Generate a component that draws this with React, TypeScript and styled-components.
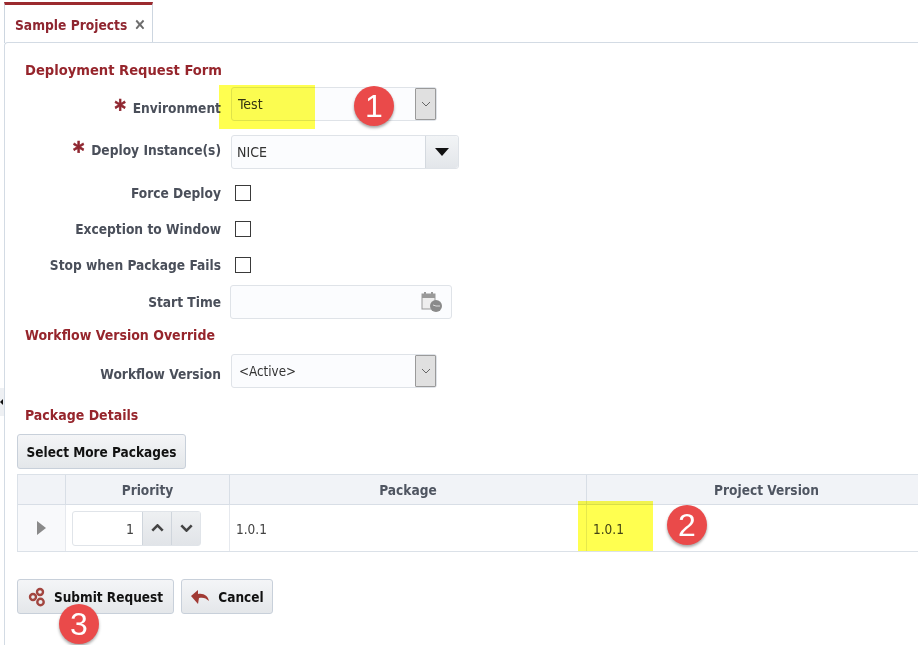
import React from "react";
import styled, { createGlobalStyle } from "styled-components";

const FONT = `"DejaVu Sans Condensed", "DejaVu Sans", sans-serif`;

const Global = createGlobalStyle`
  html, body { margin: 0; padding: 0; background: #fff; }
  body { font-family: ${FONT}; }
  #root { width: 918px; height: 645px; overflow: hidden; }
`;
const Page = styled.div`
  position: relative; width: 918px; height: 645px; overflow: hidden; background: #fff;
  display: flex; flex-direction: column;
`;
const TabBar = styled.div`
  height: 43px; box-sizing: border-box; padding: 2px 0 0 4px; display: flex; flex: none;
`;
const Tab = styled.div`
  width: 149px; height: 41px; box-sizing: border-box; border-top: 3px solid #9b2a2f;
  border-left: 1px solid #cdd6e0; border-right: 1px solid #cdd6e0; background: #fff;
  display: flex; align-items: center; padding: 2px 0 0 10px; gap: 7px;
  font: bold 13.7px ${FONT}; color: #8f2630;
`;
const Close = styled.span`color: #666; font-size: 15px; font-weight: bold; line-height: 1; -webkit-text-stroke: 0.5px #666;`;
const Panel = styled.div`
  flex: 1; margin: -1px 0 0 4px; border: 1px solid #d3dbe4; border-right: 0; border-bottom: 0;
  border-radius: 4px 0 0 0; padding: 18px 0 0 12px; box-sizing: border-box;
`;
const Heading = styled.div<{ $mb?: number }>`
  font: bold 14.6px/18px ${FONT}; color: #96252c;
  margin: 0 0 ${(p) => p.$mb ?? 0}px 8px;
`;
const SubHeading = styled(Heading)`font-size: 14px;`;
const Row = styled.div<{ $h: number; $mb?: number }>`
  display: flex; align-items: center; height: ${(p) => p.$h}px; margin-bottom: ${(p) => p.$mb ?? 0}px;
`;
const Label = styled.label<{ $nudge?: number }>`
  width: 204px; text-align: right; flex: none; margin: ${(p) => p.$nudge ?? -1}px 10px 0 0;
  font: bold 13.65px/18px ${FONT}; color: #4a4f5a;
`;
const Star = styled.span`
  color: #8f2630; font-size: 24px; font-weight: bold; line-height: 10px; margin-right: 7px; vertical-align: -4px;
  -webkit-text-stroke: 0.6px #8f2630;
`;
const Field = styled.div<{ $w: number; $h: number; $ml?: number }>`
  width: ${(p) => p.$w}px; height: ${(p) => p.$h}px; box-sizing: border-box; margin-left: ${(p) => p.$ml ?? 0}px;
  border: 1px solid #dfe3e8; border-radius: 3px; background: #fbfcfe; display: flex; align-items: center;
  font: 14px ${FONT}; color: #333;
`;
const FieldText = styled.span<{ $pad?: number; $size?: number }>`
  flex: 1; padding-left: ${(p) => p.$pad ?? 6}px; font-size: ${(p) => p.$size ?? 14}px;
`;
const Arrow = styled.div`
  width: 21px; height: 100%; box-sizing: border-box; background: #e0e0e0; border: 1px solid #9a9a9a; border-radius: 1px;
  display: flex; align-items: center; justify-content: center; flex: none;
`;
const DropButton = styled.div`
  width: 33px; height: 100%; box-sizing: border-box; border-left: 1px solid #d4d9df; background: linear-gradient(#f2f4f6, #e3e6ea);
  display: flex; align-items: center; justify-content: center; flex: none; border-radius: 0 3px 3px 0;
`;
const CalIcon = styled.svg`margin-left: auto; margin-right: 8px;`;
const Check = styled.div`
  width: 16px; height: 16px; box-sizing: border-box; border: 1px solid #3a3a3a; background: #fff; margin-left: 4px;
`;
const Btn = styled.button<{ $w: number; $mt?: number }>`
  width: ${(p) => p.$w}px; height: 35px; box-sizing: border-box; border: 1px solid #c8d0da; border-radius: 3px;
  background: linear-gradient(#f4f5f7, #e4e7ea); color: #111; padding: 0; margin-top: ${(p) => p.$mt ?? 0}px; flex: none;
  font: bold 13.5px ${FONT};
  display: flex; align-items: center; justify-content: center; gap: 8px;
`;
const TableWrap = styled.div`
  margin: 5px 0 0 0; width: 930px; height: 78px; box-sizing: border-box;
  border: 1px solid #dbe1e8; border-right: 0;
`;
const COLS = `48px 164px 357px 1fr`;
const HeadRow = styled.div`
  display: grid; grid-template-columns: ${COLS}; height: 30px; background: #f1f3f7; border-bottom: 1px solid #d8dee6;
  box-sizing: border-box;
`;
const HeadCell = styled.div`
  display: flex; align-items: center; justify-content: center; border-right: 1px solid #d8dee6; box-sizing: border-box;
  font: bold 13.6px ${FONT}; color: #4f5561;
`;
const BodyRow = styled.div`
  display: grid; grid-template-columns: ${COLS}; height: 46px;
`;
const BodyCell = styled.div<{ $shade?: boolean; $center?: boolean }>`
  display: flex; align-items: center; box-sizing: border-box; padding-left: ${(p) => (p.$center ? 0 : 6)}px;
  justify-content: ${(p) => (p.$center ? "center" : "flex-start")};
  border-right: 1px solid #e6e9ee; background: ${(p) => (p.$shade ? "#f8f9fb" : "#fff")};
  font: 13.5px ${FONT}; color: #444;
`;
const CellText = styled.span`margin-top: 2px;`;
const Spin = styled.div`
  width: 129px; height: 35px; box-sizing: border-box; border: 1px solid #e0e4e9; border-radius: 3px; display: flex; background: #fff;
`;
const SpinValue = styled.div`
  width: 69px; display: flex; align-items: center; justify-content: flex-end; padding: 2px 8px 0 0; box-sizing: border-box; font-size: 14px; color: #444;
`;
const SpinBtn = styled.div`
  flex: 1; border-left: 1px solid #cfd5dc; background: linear-gradient(#eef0f2, #e1e4e8);
  display: flex; align-items: center; justify-content: center;
`;
const Actions = styled.div`display: flex; gap: 7px; margin-top: 27px;`;
const Highlight = styled.div<{ $x: number; $y: number; $w: number; $h: number }>`
  position: absolute; left: ${(p) => p.$x}px; top: ${(p) => p.$y}px; width: ${(p) => p.$w}px; height: ${(p) => p.$h}px;
  background: #ffff50; mix-blend-mode: multiply; z-index: 3;
`;
const Badge = styled.div<{ $x: number; $y: number }>`
  position: absolute; left: ${(p) => p.$x}px; top: ${(p) => p.$y}px; width: 40px; height: 40px; border-radius: 50%;
  background: #ea4a4a; color: #fff; z-index: 4; box-shadow: 0 2px 3px rgba(0,0,0,.35);
  display: flex; align-items: center; justify-content: center; font: 32px "Liberation Sans", Arial, sans-serif;
`;
const Handle = styled.div`
  position: absolute; left: 0; top: 388px; width: 4px; height: 28px; background: #eef0f3; border-right: 1px solid #d3dbe4;
  z-index: 2; display: flex; align-items: center; overflow: hidden;
`;

const Chevron = ({ d = "M1 1l4 4 4-4", c = "#666", w = 10, h = 6, sw = 1 }: any) => (
  <svg width={w} height={h} viewBox="0 0 10 6"><path d={d} fill="none" stroke={c} strokeWidth={sw} /></svg>
);

export default function App() {
  return (
    <Page>
      <Global />
      <TabBar>
        <Tab>Sample Projects <Close>✕</Close></Tab>
      </TabBar>
      <Panel>
        <Heading $mb={8}>Deployment Request Form</Heading>
        <Row $h={34} $mb={14}>
          <Label $nudge={7}><Star>*</Star>Environment</Label>
          <Field $w={206} $h={34}><FieldText>Test</FieldText><Arrow><Chevron /></Arrow></Field>
        </Row>
        <Row $h={33} $mb={15}>
          <Label $nudge={-4}><Star>*</Star>Deploy Instance(s)</Label>
          <Field $w={228} $h={34}>
            <FieldText $pad={5}>NICE</FieldText>
            <DropButton><svg width="14" height="8" viewBox="0 0 14 8"><path d="M0 0h14L7 8z" fill="#111" /></svg></DropButton>
          </Field>
        </Row>
        <Row $h={20} $mb={16}><Label>Force Deploy</Label><Check /></Row>
        <Row $h={20} $mb={16}><Label>Exception to Window</Label><Check /></Row>
        <Row $h={20} $mb={10}><Label>Stop when Package Fails</Label><Check /></Row>
        <Row $h={34} $mb={7}>
          <Label>Start Time</Label>
          <Field $w={222} $h={34} $ml={-1}>
            <CalIcon width="22" height="22" viewBox="0 0 22 22">
              <rect x="1" y="3" width="13" height="15" fill="#eee" stroke="#999" />
              <rect x="1" y="3" width="13" height="4" fill="#999" />
              <rect x="3" y="1" width="2" height="4" fill="#999" /><rect x="10" y="1" width="2" height="4" fill="#999" />
              <circle cx="15" cy="15" r="6" fill="#8a8a8a" />
              <path d="M12 14l3 1h4" stroke="#ddd" strokeWidth="1" fill="none" />
            </CalIcon>
          </Field>
        </Row>
        <SubHeading $mb={10}>Workflow Version Override</SubHeading>
        <Row $h={34} $mb={18}>
          <Label $nudge={5}>Workflow Version</Label>
          <Field $w={206} $h={34}><FieldText $pad={7} $size={13.3}>&lt;Active&gt;</FieldText><Arrow><Chevron /></Arrow></Field>
        </Row>
        <SubHeading>Package Details</SubHeading>
        <Btn $w={169} $mt={10}>Select More Packages</Btn>
        <TableWrap>
          <HeadRow>
            <HeadCell />
            <HeadCell>Priority</HeadCell>
            <HeadCell>Package</HeadCell>
            <HeadCell>Project Version</HeadCell>
          </HeadRow>
          <BodyRow>
            <BodyCell $shade $center>
              <svg width="9" height="14" viewBox="0 0 9 14"><path d="M0 0l9 7-9 7z" fill="#8a8a8a" /></svg>
            </BodyCell>
            <BodyCell>
              <Spin>
                <SpinValue>1</SpinValue>
                <SpinBtn><Chevron d="M1 5l4-4 4 4" c="#444" w={13} h={8} sw={2} /></SpinBtn>
                <SpinBtn><Chevron c="#444" w={13} h={8} sw={2} /></SpinBtn>
              </Spin>
            </BodyCell>
            <BodyCell><CellText>1.0.1</CellText></BodyCell>
            <BodyCell><CellText>1.0.1</CellText></BodyCell>
          </BodyRow>
        </TableWrap>
        <Actions>
          <Btn $w={157}>
            <svg width="18" height="20" viewBox="0 0 18 20">
              <g fill="none" stroke="#a2453f" strokeWidth="2.4">
                <circle cx="5" cy="10" r="3" /><circle cx="12" cy="5" r="3" /><circle cx="12.5" cy="15" r="3.2" />
              </g>
            </svg>
            Submit Request
          </Btn>
          <Btn $w={92}>
            <svg width="20" height="16" viewBox="0 0 20 16">
              <path d="M1 7l7-6v4c6-1 10 2 11 7-3-3-6-4-10-3l-1 6z" fill="#a13a34" />
            </svg>
            Cancel
          </Btn>
        </Actions>
      </Panel>
      <Handle>
        <svg width="3" height="6" viewBox="0 0 3 6"><path d="M3 0v6L0 3z" fill="#111" /></svg>
      </Handle>
      <Highlight $x={219} $y={85} $w={96} $h={44} />
      <Highlight $x={578} $y={501} $w={75} $h={50} />
      <Badge $x={354} $y={86}>1</Badge>
      <Badge $x={667} $y={505}>2</Badge>
      <Badge $x={59} $y={604}>3</Badge>
    </Page>
  );
}
